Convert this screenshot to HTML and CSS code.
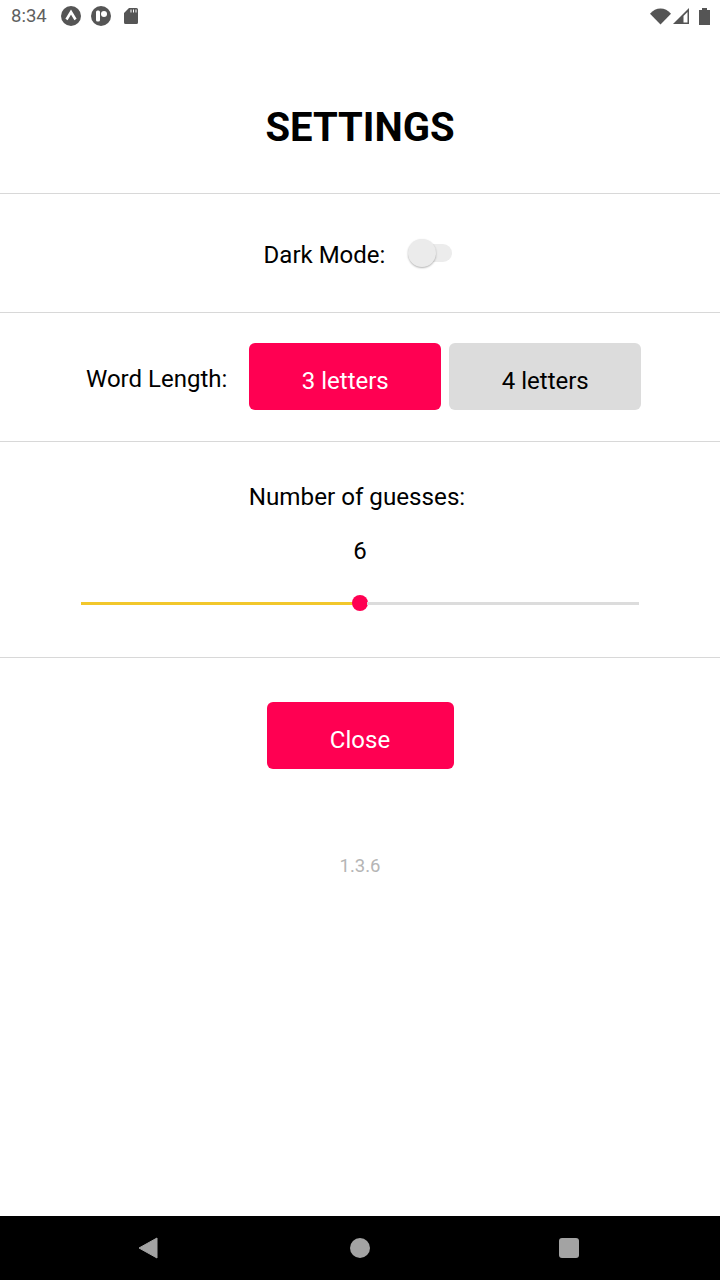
FILE: index.html
```html
<!DOCTYPE html>
<html lang="en">
<head>
  <meta charset="UTF-8" />
  <title>Settings</title>
  <link rel="stylesheet" href="styles.css">
</head>
<body>
  <div class="status-bar">
    <span class="clock">8:34</span>
    <svg class="note-icon" viewBox="0 0 20 20"><circle cx="10" cy="10" r="10" fill="#555"/><path d="M5.500 13.500 10 6l4.500 7.500" fill="none" stroke="#fff" stroke-width="2.600"/></svg>
    <svg class="note-icon" viewBox="0 0 20 20"><circle cx="10" cy="10" r="10" fill="#555"/><rect x="5" y="4.500" width="4" height="11" rx="1.500" fill="#fff"/><circle cx="13" cy="8" r="3" fill="#fff"/></svg>
    <svg class="sd-icon" viewBox="0 0 14 16"><path d="M5 0h7.500A1.500 1.500 0 0 1 14 1.500v13a1.500 1.500 0 0 1-1.500 1.500h-11A1.500 1.500 0 0 1 0 14.500V5z" fill="#555"/><path d="M6.500 1.500h1v3h-1zM9 1.500h1v3H9zM11.500 1.500h1v3h-1z" fill="#fff"/></svg>
    <span class="status-right">
      <svg class="wifi-icon" viewBox="0 0 22 17"><path d="M0 5.500C6 -1.800 16 -1.800 22 5.500L11 17z" fill="#555"/></svg>
      <svg class="signal-icon" viewBox="0 0 16 16"><path d="M16 0v16H0z" fill="#555"/><path d="M14.500 4v10.500H10.500V8z" fill="#fff"/></svg>
      <svg class="battery-icon" viewBox="0 0 11 17"><path d="M3 0h5v2h3v15H0V2h3z" fill="#555"/></svg>
    </span>
  </div>

  <main class="settings">
    <h1 class="title">SETTINGS</h1>

    <section class="row row-dark">
      <span class="label">Dark Mode:</span>
      <span class="switch"><span class="switch-thumb"></span></span>
    </section>

    <section class="row row-length">
      <span class="label">Word Length:</span>
      <div class="length-buttons">
        <button class="btn btn-on">3 letters</button>
        <button class="btn btn-off">4 letters</button>
      </div>
    </section>

    <section class="guesses">
      <div class="label guesses-label">Number of guesses:</div>
      <div class="label guesses-value">6</div>
      <div class="slider">
        <div class="slider-done"></div>
        <div class="slider-thumb"></div>
        <div class="slider-rest"></div>
      </div>
    </section>

    <div class="footer">
      <button class="btn btn-on btn-close">Close</button>
      <div class="version">1.3.6</div>
    </div>
  </main>

  <nav class="nav-bar">
    <svg class="nav-back" viewBox="0 0 20 22"><path d="M19 1v20L1 11z" fill="#a3a3a3" stroke="#a3a3a3" stroke-width="1" stroke-linejoin="round"/></svg>
    <span class="nav-home"></span>
    <span class="nav-recent"></span>
  </nav>
</body>
</html>
```
FILE: styles.css
```css
* {
  box-sizing: border-box;
}
body {
  margin: 0;
  background: #fff;
  color: #000;
  font-family: Roboto, sans-serif;
  display: flex;
  flex-direction: column;
  height: 1280px;
  overflow: hidden;
}
.status-bar {
  height: 32px;
  display: flex;
  align-items: center;
  padding: 0 10px 0 11px;
  flex-shrink: 0;
}
.clock {
  font-size: 18.500px;
  color: #5f5f5f;
  margin-right: 14px;
}
.note-icon {
  width: 20px;
  height: 20px;
  margin-right: 10px;
}
.sd-icon {
  width: 14px;
  height: 16px;
  margin-left: 3px;
  margin-top: -1px;
}
.status-right {
  margin-left: auto;
  display: flex;
  align-items: center;
}
.wifi-icon {
  width: 21px;
  height: 17px;
  margin-right: 2px;
}
.signal-icon {
  width: 16px;
  height: 16px;
  margin-right: 10px;
}
.battery-icon {
  width: 11px;
  height: 17px;
}
.settings {
  flex: 1;
}
.title {
  margin: 0;
  height: 162px;
  padding-top: 71px;
  line-height: 50px;
  text-align: center;
  font-size: 40px;
  font-weight: 700;
  border-bottom: 1px solid #d8d8d8;
}
.label {
  font-size: 24px;
  line-height: 30px;
  white-space: nowrap;
}
.row {
  display: flex;
  align-items: center;
  justify-content: center;
  border-bottom: 1px solid #d8d8d8;
}
.row-dark {
  height: 119px;
  padding: 3px 4px 0 0;
}
.switch {
  position: relative;
  width: 43px;
  height: 18px;
  margin-left: 24px;
  margin-top: -3px;
  border-radius: 9px;
  background: #ececec;
}
.switch-thumb {
  position: absolute;
  left: -1px;
  top: -5px;
  width: 28px;
  height: 28px;
  border-radius: 50%;
  background: #ebebeb;
  box-shadow: 0 1px 2px rgba(0, 0, 0, 0.3);
}
.row-length {
  height: 129px;
  padding: 0 0 1px 86px;
  justify-content: flex-start;
}
.row-length .label {
  margin-top: 4px;
}
.length-buttons {
  display: flex;
  gap: 8px;
  margin-left: 22px;
}
.btn {
  border: 0;
  border-radius: 6px;
  height: 67px;
  padding: 9px 0 0;
  font-family: Roboto, sans-serif;
  font-size: 24px;
}
.btn-on {
  background: #ff0052;
  color: #fff;
}
.btn-off {
  background: #dcdcdc;
  color: #000;
}
.length-buttons .btn {
  width: 192px;
}
.guesses {
  height: 216px;
  padding-top: 40px;
  border-bottom: 1px solid #d8d8d8;
  text-align: center;
}
.guesses-label {
  font-size: 24.200px;
  padding-right: 6px;
}
.guesses-value {
  margin-top: 24px;
}
.slider {
  display: flex;
  align-items: center;
  margin: 27px 81px 0;
  height: 20px;
}
.slider-done {
  flex: 1;
  height: 3px;
  background: #f2c72b;
}
.slider-rest {
  flex: 1;
  height: 3px;
  background: #dcdcdc;
}
.slider-thumb {
  width: 16px;
  height: 16px;
  border-radius: 50%;
  background: #ff0052;
  flex-shrink: 0;
  margin: 0 -1px;
}
.footer {
  display: flex;
  flex-direction: column;
  align-items: center;
  padding-top: 44px;
}
.btn-close {
  width: 187px;
}
.version {
  margin-top: 85px;
  font-size: 18.500px;
  line-height: 24px;
  color: #b5b5b5;
}
.nav-bar {
  height: 64px;
  flex-shrink: 0;
  background: #000;
  display: flex;
  align-items: center;
  padding: 0 0 0 138px;
}
.nav-back {
  width: 20px;
  height: 22px;
}
.nav-home {
  width: 20px;
  height: 20px;
  margin-left: 192px;
  border-radius: 50%;
  background: #a3a3a3;
}
.nav-recent {
  width: 20px;
  height: 20px;
  margin-left: 189px;
  border-radius: 3px;
  background: #a3a3a3;
}
```
